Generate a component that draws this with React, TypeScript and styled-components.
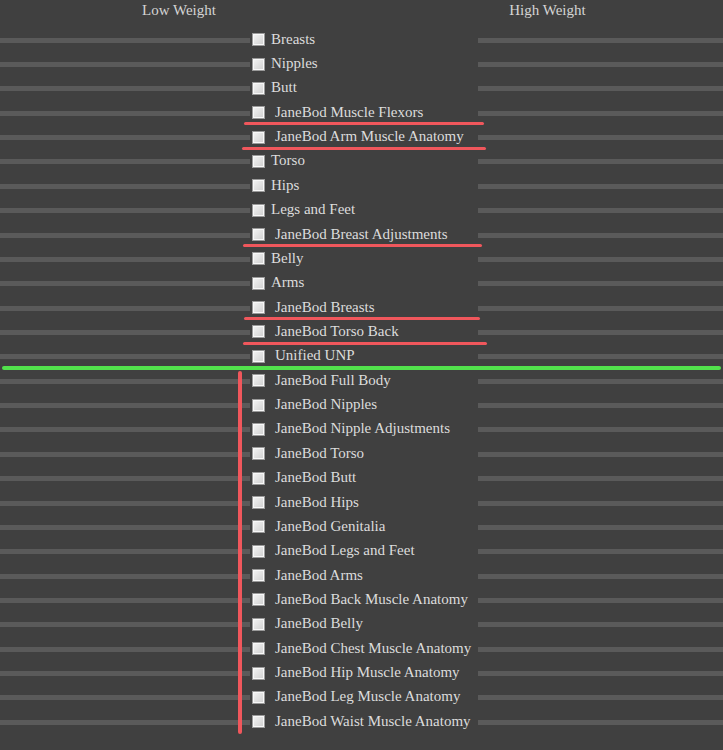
import React from "react";
import styled, { createGlobalStyle } from "styled-components";

const Global = createGlobalStyle`
  html, body { margin: 0; padding: 0; background: #404040; }
  body { font-family: "Liberation Serif", "DejaVu Serif", serif; }
`;

const Page = styled.div`
  width: 723px;
  height: 750px;
  background: #404040;
  overflow: hidden;
  color: #dcdcdc;
`;

const Header = styled.div`
  display: grid;
  grid-template-columns: 358px 1fr;
  height: 27px;
  align-items: center;
  font-size: 15px;
  color: #d4d4d4;
`;

const HeadCell = styled.div<{ $shift?: number }>`
  text-align: center;
  margin-top: -6px;
  transform: translateX(${(p) => p.$shift ?? 0}px);
`;

const List = styled.div`
  display: flex;
  flex-direction: column;
`;

const Group = styled.div<{ $bracket?: boolean }>`
  position: relative;
  display: flex;
  flex-direction: column;
  ${(p) =>
    p.$bracket
      ? `
    &::before {
      content: "";
      position: absolute;
      left: 238px;
      top: 3px;
      bottom: -1px;
      width: 4px;
      border-radius: 2px;
      background: #f0575c;
      z-index: 2;
    }
  `
      : ""}
`;

const Row = styled.div<{ $uStart?: number; $uEnd?: number; $sep?: boolean }>`
  position: relative;
  display: grid;
  grid-template-columns: 250px 228px 1fr;
  align-items: center;
  height: 24.36px;
  ${(p) =>
    p.$uStart !== undefined
      ? `
    &::after {
      content: "";
      position: absolute;
      left: ${p.$uStart}px;
      width: ${(p.$uEnd ?? 0) - p.$uStart}px;
      bottom: -1px;
      height: 3px;
      border-radius: 2px;
      background: #f0575c;
      z-index: 2;
    }
  `
      : ""}
  ${(p) =>
    p.$sep
      ? `
    &::after {
      content: "";
      position: absolute;
      left: 2px;
      right: 2px;
      bottom: -2px;
      height: 4px;
      border-radius: 2px;
      background: #52e24c;
      z-index: 2;
    }
  `
      : ""}
`;

const Track = styled.div`
  height: 5px;
  margin-top: 2px;
  background: #5a5a5a;
`;

const Label = styled.label<{ $indent: boolean }>`
  display: flex;
  align-items: center;
  font-size: 15px;
  white-space: nowrap;
  color: #dcdcdc;
  padding-left: 2px;
  span {
    padding-left: ${(p) => (p.$indent ? 10 : 6)}px;
  }
`;

const Box = styled.i`
  display: block;
  flex: none;
  width: 11px;
  height: 11px;
  margin-top: 1px;
  border: 1px solid #9a9a9a;
  background: linear-gradient(135deg, #f4f4f4 0%, #dedede 60%, #cfcfcf 100%);
  box-shadow: inset 0 0 0 1px #f8f8f8;
`;

type Item = { name: string; u?: [number, number]; indent?: boolean; sep?: boolean };

const upper: Item[] = [
  { name: "Breasts" },
  { name: "Nipples" },
  { name: "Butt" },
  { name: "JaneBod Muscle Flexors", indent: true, u: [244, 484] },
  { name: "JaneBod Arm Muscle Anatomy", indent: true, u: [242, 486] },
  { name: "Torso" },
  { name: "Hips" },
  { name: "Legs and Feet" },
  { name: "JaneBod Breast Adjustments", indent: true, u: [243, 482] },
  { name: "Belly" },
  { name: "Arms" },
  { name: "JaneBod Breasts", indent: true, u: [244, 480] },
  { name: "JaneBod Torso Back", indent: true, u: [243, 487] },
  { name: "Unified UNP", indent: true, sep: true },
];

const lower: Item[] = [
  "JaneBod Full Body",
  "JaneBod Nipples",
  "JaneBod Nipple Adjustments",
  "JaneBod Torso",
  "JaneBod Butt",
  "JaneBod Hips",
  "JaneBod Genitalia",
  "JaneBod Legs and Feet",
  "JaneBod Arms",
  "JaneBod Back Muscle Anatomy",
  "JaneBod Belly",
  "JaneBod Chest Muscle Anatomy",
  "JaneBod Hip Muscle Anatomy",
  "JaneBod Leg Muscle Anatomy",
  "JaneBod Waist Muscle Anatomy",
].map((name) => ({ name, indent: true }));

const SliderRow: React.FC<{ item: Item }> = ({ item }) => (
  <Row $uStart={item.u?.[0]} $uEnd={item.u?.[1]} $sep={item.sep}>
    <Track />
    <Label $indent={!!item.indent}>
      <Box />
      <span>{item.name}</span>
    </Label>
    <Track />
  </Row>
);

export default function App() {
  return (
    <Page>
      <Global />
      <Header>
        <HeadCell>Low Weight</HeadCell>
        <HeadCell $shift={7}>High Weight</HeadCell>
      </Header>
      <List>
        <Group>
          {upper.map((it) => (
            <SliderRow key={it.name} item={it} />
          ))}
        </Group>
        <Group $bracket>
          {lower.map((it) => (
            <SliderRow key={it.name} item={it} />
          ))}
        </Group>
      </List>
    </Page>
  );
}
